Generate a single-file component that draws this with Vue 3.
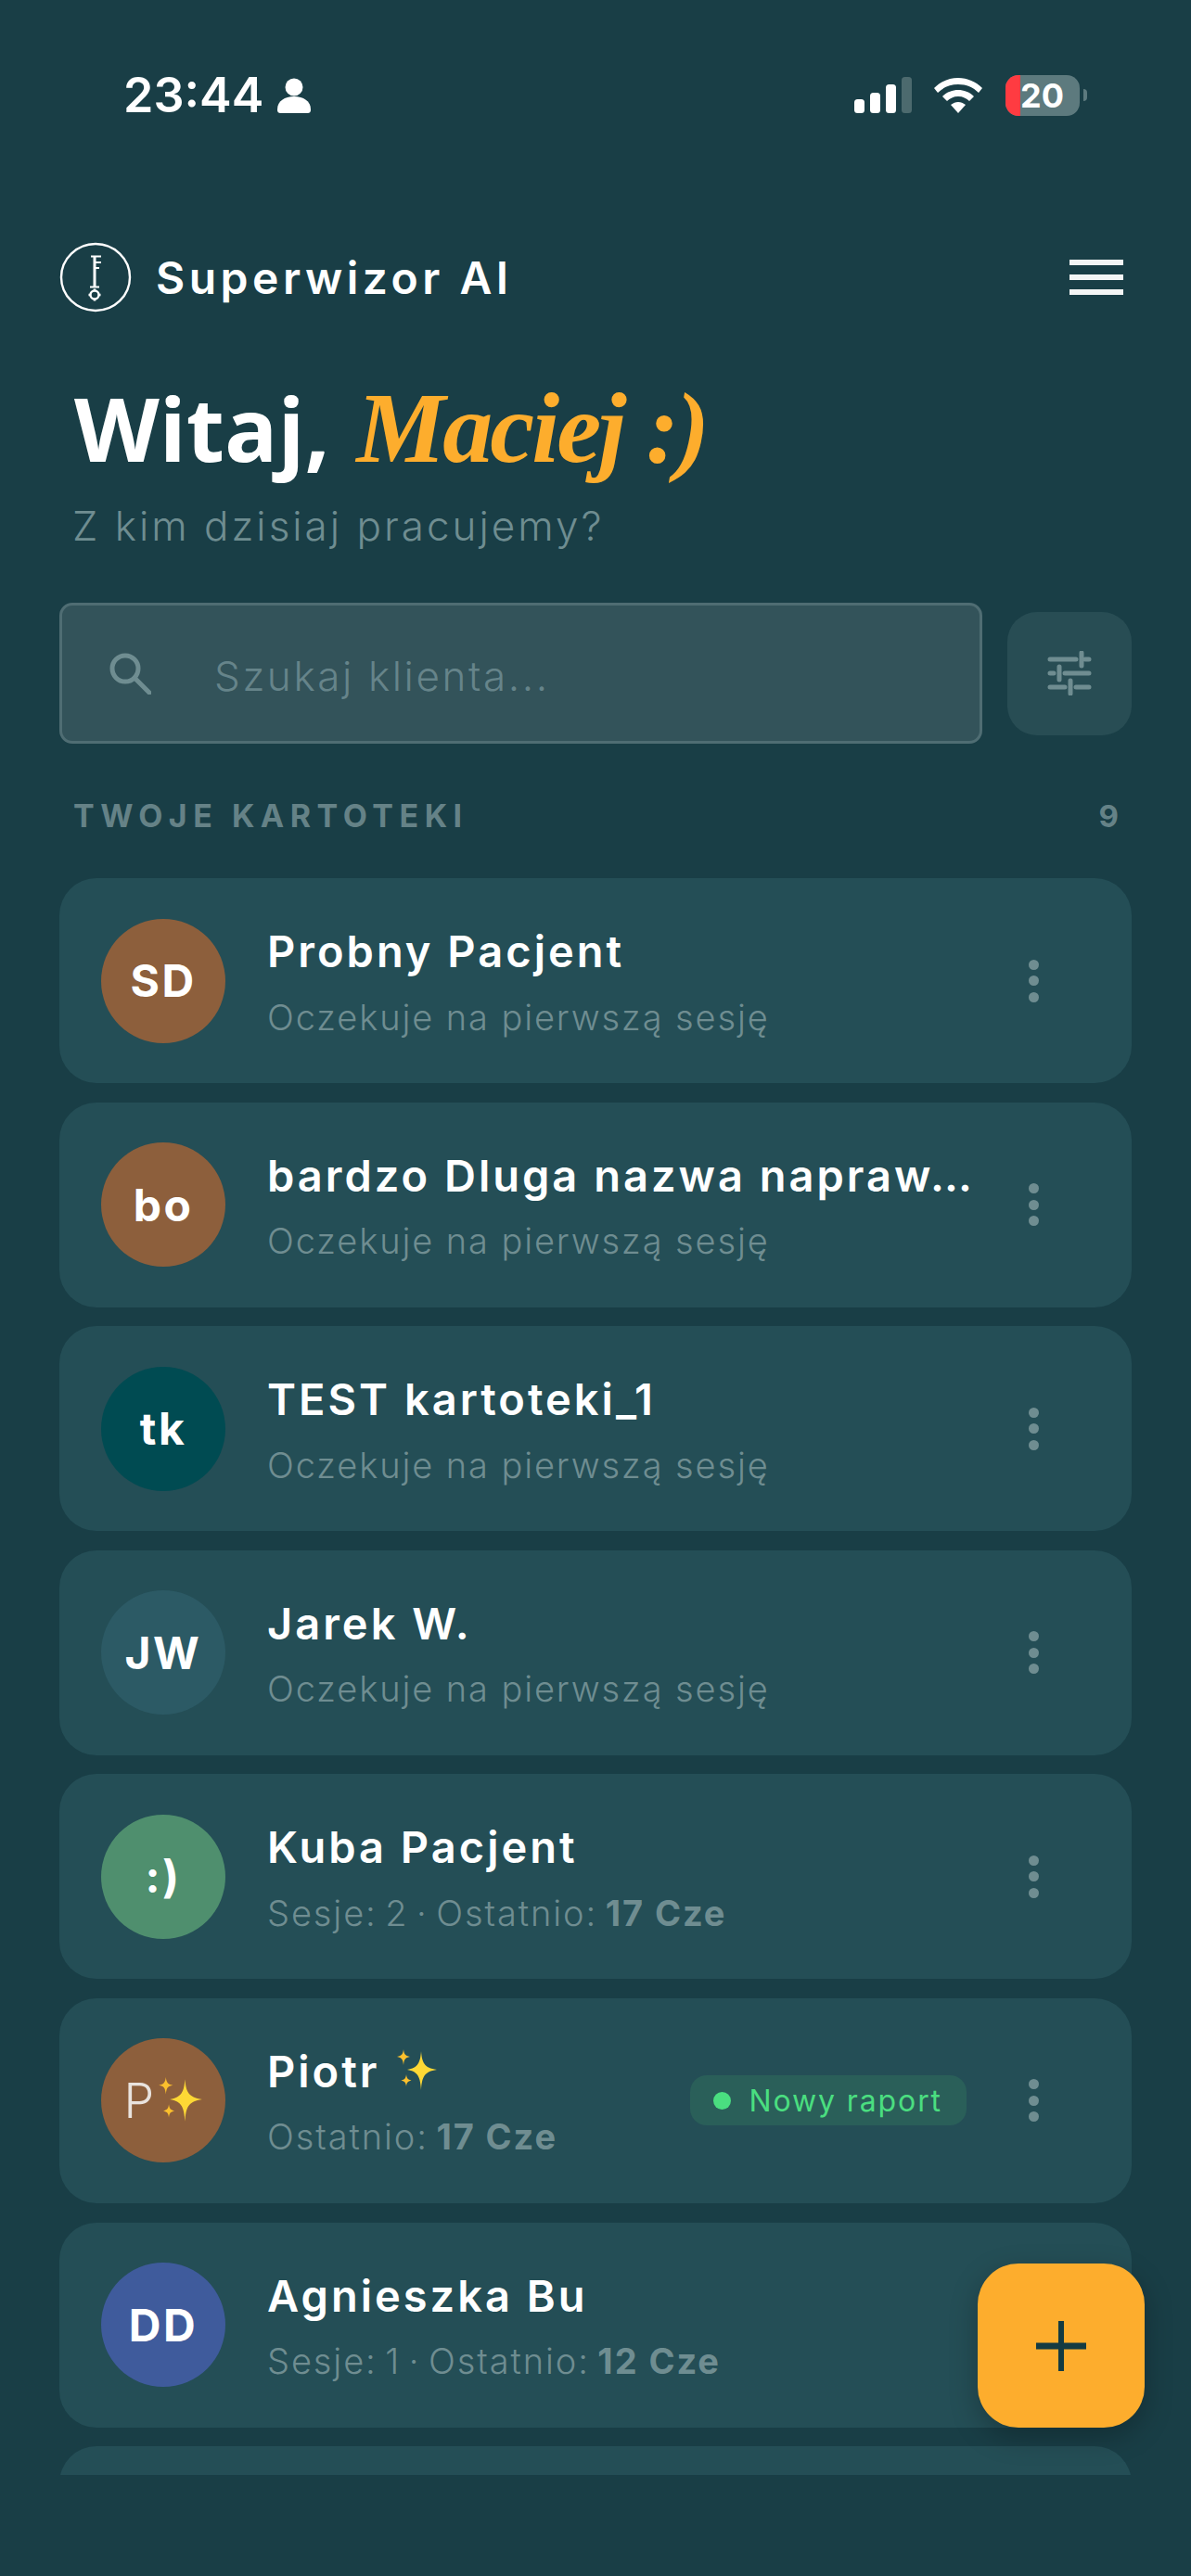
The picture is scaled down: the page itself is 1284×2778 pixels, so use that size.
<template>
  <div class="page">
    <div class="status">
      <div class="status-left">
        <span class="time">23:44</span>
        <svg class="person" viewBox="0 0 36 38" width="36" height="38"><circle cx="18" cy="10" r="9.5" fill="#fff" /><path d="M0 34c0-9 8-14 18-14s18 5 18 14c0 3-1 4-4 4H4c-3 0-4-1-4-4z" fill="#fff" /></svg>
      </div>
      <div class="status-right">
        <svg viewBox="0 0 62 40" width="62" height="40">
          <rect x="0" y="24" width="11" height="15" rx="3.5" fill="#fff" />
          <rect x="17" y="17" width="11" height="22" rx="3.5" fill="#fff" />
          <rect x="34" y="8" width="11" height="31" rx="3.5" fill="#fff" />
          <rect x="51" y="0" width="11" height="39" rx="3.5" fill="#4c6a6e" />
        </svg>
        <svg class="wifi" viewBox="0 0 54 40" width="54" height="40">
          <path d="M27 1C17 1 8 5 1 12l4 5c6-6 13-9 22-9s16 3 22 9l4-5C46 5 37 1 27 1z" fill="#fff" />
          <path d="M27 14c-6 0-12 2-17 7l5 5c3-3 7-5 12-5s9 2 12 5l5-5c-5-5-11-7-17-7z" fill="#fff" />
          <path d="M27 27c-3 0-5 1-8 3l8 9 8-9c-3-2-5-3-8-3z" fill="#fff" />
        </svg>
        <div class="battery">
          <div class="battery-fill"></div>
          <span class="battery-num">20</span>
          <div class="battery-nub"></div>
        </div>
      </div>
    </div>

    <header class="top">
      <div class="brand">
        <svg class="logo" viewBox="0 0 78 76" width="78" height="76" fill="none" stroke="#fff">
          <ellipse cx="39" cy="38" rx="37" ry="36" stroke-width="2.4" />
          <path d="M38 15v34" stroke-width="3" />
          <path d="M34 15.500h11M38 22h7M38 28h5M33 48.500h10" stroke-width="2.2" />
          <circle cx="38" cy="57" r="4.500" stroke-width="2.400" />
          <path d="M38 50.500v2M38 61.500v2M31.500 57h2M42.500 57h2" stroke-width="2.600" />
        </svg>
        <span class="brand-name">Superwizor AI</span>
      </div>
      <div class="burger"><i></i><i></i><i></i></div>
    </header>

    <h1 class="hello">Witaj, <em>Maciej :)</em></h1>
    <p class="question">Z kim dzisiaj pracujemy?</p>

    <div class="search-row">
      <div class="search">
        <svg viewBox="0 0 46 46" width="46" height="46" fill="none" stroke="#6f8d91" stroke-width="5">
          <circle cx="18" cy="18" r="14" />
          <path d="M28 28l16 16" stroke-linecap="round" />
        </svg>
        <span class="placeholder">Szukaj klienta...</span>
      </div>
      <div class="filter">
        <svg viewBox="0 0 48 48" width="48" height="48" fill="none" stroke="#6f8d91" stroke-width="5" stroke-linecap="round">
          <path d="M3 9h28M41 9h4M37 2v14" />
          <path d="M3 24h4M19 24h26M13 17v14" />
          <path d="M3 39h16M31 39h14M25 32v14" />
        </svg>
      </div>
    </div>

    <div class="section">
      <span class="section-title">TWOJE KARTOTEKI</span>
      <span class="section-count">9</span>
    </div>

    <div class="list">
      <div v-for="c in clients" :key="c.name" class="card">
        <div class="avatar" :class="{ thin: c.spark }" :style="{ background: c.color }">
          {{ c.initials }}
          <svg v-if="c.spark" class="spark-big" viewBox="0 0 44 46" width="50" height="50"><use href="#sparkles" /></svg>
        </div>
        <div class="info">
          <div class="name">
            <span class="name-text">{{ c.name }}</span>
            <svg v-if="c.spark" class="spark" viewBox="0 0 44 46" width="48" height="46"><use href="#sparkles" /></svg>
          </div>
          <div class="sub" :class="{ dated: c.date }">{{ c.sub }}<b v-if="c.date">{{ c.date }}</b></div>
        </div>
        <div v-if="c.badge" class="badge"><i></i>{{ c.badge }}</div>
        <div class="dots"><i></i><i></i><i></i></div>
      </div>
      <div class="card"></div>
    </div>

    <div class="fab">
      <svg viewBox="0 0 54 54" width="54" height="54" fill="none" stroke="#143b42"><path d="M27 0v54" stroke-width="6" /><path d="M0 27h54" stroke-width="7" /></svg>
    </div>

    <svg width="0" height="0" class="defs">
      <defs>
        <symbol id="sparkles" viewBox="0 0 44 46">
          <path d="M27 2c1 12 3 18 17 20-14 2-16 8-17 22-1-14-3-20-15-22 12-2 14-8 15-20z" fill="#fdd835" />
          <path d="M8 0c.6 5 1.600 7 7 8-5.400 1-6.400 3-7 9-.6-6-1.600-8-7-9 5.400-1 6.400-3 7-8z" fill="#fbc02d" />
          <path d="M11 27c.5 4 1.300 5.500 5.500 6.500-4.200 1-5 2.500-5.500 6.500-.5-4-1.300-5.500-5.500-6.500 4.200-1 5-2.500 5.500-6.500z" fill="#fbc02d" />
        </symbol>
      </defs>
    </svg>
  </div>
</template>

<script setup>
const WAITING = 'Oczekuje na pierwszą sesję'

const clients = [
  { initials: 'SD', name: 'Probny Pacjent', sub: WAITING, color: '#8d5f3c' },
  { initials: 'bo', name: 'bardzo Dluga nazwa napraw…', sub: WAITING, color: '#8d5f3c' },
  { initials: 'tk', name: 'TEST kartoteki_1', sub: WAITING, color: '#004b52' },
  { initials: 'JW', name: 'Jarek W.', sub: WAITING, color: '#2c5a65' },
  { initials: ':)', name: 'Kuba Pacjent', sub: 'Sesje: 2 · Ostatnio: ', date: '17 Cze', color: '#4f8f6e' },
  { initials: 'P', name: 'Piotr', sub: 'Ostatnio: ', date: '17 Cze', color: '#8d5f3c', spark: true, badge: 'Nowy raport' },
  { initials: 'DD', name: 'Agnieszka Bu', sub: 'Sesje: 1 · Ostatnio: ', date: '12 Cze', color: '#3f5b9c' },
]
</script>

<style>
html,
body {
  margin: 0;
  background: #193e46;
}
</style>

<style scoped>
.page {
  position: relative;
  width: 1284px;
  height: 2778px;
  overflow: hidden;
  background: #193e46;
  color: #fff;
  font-family: Inter, "Noto Sans", sans-serif;
}
.defs {
  position: absolute;
}

.status {
  display: flex;
  justify-content: space-between;
  align-items: center;
  height: 44px;
  padding: 81px 120px 0 133px;
}
.status-left {
  display: flex;
  align-items: center;
  gap: 15px;
}
.time {
  font-size: 52px;
  font-weight: 600;
  line-height: 44px;
}
.status-right {
  display: flex;
  align-items: center;
}
.wifi {
  margin-left: 23px;
}
.battery {
  position: relative;
  width: 80px;
  height: 44px;
  margin-left: 24px;
  border-radius: 14px;
  background: #5d7a7e;
  display: flex;
  align-items: center;
  justify-content: flex-end;
  padding-right: 17px;
  box-sizing: border-box;
}
.battery-fill {
  position: absolute;
  left: 0;
  top: 0;
  bottom: 0;
  width: 16px;
  background: #ff3b41;
  border-radius: 14px 0 0 14px;
}
.battery-num {
  position: relative;
  font-size: 36px;
  font-weight: 700;
}
.battery-nub {
  position: absolute;
  right: -8px;
  top: 15px;
  width: 4px;
  height: 13px;
  border-radius: 0 7px 7px 0;
  background: #5d7a7e;
}

.top {
  display: flex;
  justify-content: space-between;
  align-items: center;
  margin-top: 136px;
  padding: 0 73px 0 64px;
}
.brand {
  display: flex;
  align-items: center;
  gap: 26px;
}
.brand-name {
  font-size: 48px;
  font-weight: 600;
  letter-spacing: 4.5px;
}
.burger {
  display: flex;
  flex-direction: column;
  gap: 10px;
}
.burger i {
  display: block;
  width: 58px;
  height: 6px;
  background: #f3f5f5;
}

.hello {
  margin: 69px 0 0 80px;
  font-family: "Open Sans", sans-serif;
  font-size: 95px;
  font-weight: 700;
  line-height: 110px;
  letter-spacing: 0;
}
.hello em {
  margin-left: 4px;
  color: #fdad2d;
  font-family: "Liberation Serif", serif;
  font-size: 108px;
  font-weight: 700;
  font-style: italic;
  letter-spacing: -3px;
}
.question {
  margin: 23px 0 0 78px;
  color: #6f8d91;
  font-size: 44px;
  font-weight: 300;
  line-height: 54px;
  letter-spacing: 3px;
}

.search-row {
  display: flex;
  align-items: center;
  gap: 27px;
  margin: 56px 64px 0;
}
.search {
  flex: 1;
  display: flex;
  align-items: center;
  gap: 68px;
  height: 152px;
  padding-left: 50px;
  box-sizing: border-box;
  background: #33535a;
  border: 3px solid #4f6d73;
  border-radius: 14px;
}
.placeholder {
  padding-top: 5px;
  color: #66848a;
  font-size: 44px;
  font-weight: 300;
  letter-spacing: 2.6px;
}
.filter {
  display: flex;
  align-items: center;
  justify-content: center;
  width: 134px;
  height: 133px;
  background: #284d54;
  border-radius: 32px;
}

.section {
  display: flex;
  justify-content: space-between;
  align-items: center;
  margin: 58px 78px 0 79px;
  color: #658287;
  font-weight: 700;
  line-height: 40px;
}
.section-title {
  font-size: 34px;
  letter-spacing: 6.500px;
}
.section-count {
  font-size: 33px;
}

.list {
  display: flex;
  flex-direction: column;
  gap: 20.6px;
  height: 1722px;
  margin: 47px 64px 0;
  overflow: hidden;
}
.card {
  display: flex;
  flex: none;
  align-items: center;
  height: 221px;
  padding: 0 100px 0 45px;
  background: #244e56;
  border-radius: 40px;
}
.avatar {
  display: flex;
  flex: none;
  align-items: center;
  justify-content: center;
  width: 134px;
  height: 134px;
  border-radius: 50%;
  font-size: 48px;
  font-weight: 700;
  letter-spacing: 2.500px;
}
.avatar.thin {
  font-size: 52px;
  font-weight: 300;
  color: #e9e3de;
  box-sizing: border-box;
}
.info {
  flex: 1;
  min-width: 0;
  margin-left: 45px;
}
.name {
  display: flex;
  align-items: center;
  gap: 16px;
  height: 60px;
  font-size: 47px;
  font-weight: 600;
  letter-spacing: 3px;
}
.name-text {
  white-space: nowrap;
}
.sub {
  margin-top: 18px;
  color: #6f8d91;
  font-size: 38px;
  font-weight: 300;
  line-height: 46px;
  letter-spacing: 1.900px;
}
.sub.dated {
  word-spacing: -4px;
}
.sub b {
  font-weight: 700;
  word-spacing: 0;
}
.badge {
  display: flex;
  flex: none;
  align-items: center;
  gap: 19px;
  height: 54px;
  padding: 0 26px 0 25px;
  margin-left: 12px;
  color: #4ade80;
  background: #2a5f59;
  border-radius: 18px;
  font-size: 32px;
  letter-spacing: 1.900px;
}
.badge i {
  width: 19px;
  height: 19px;
  border-radius: 50%;
  background: #4ade80;
}
.dots {
  display: flex;
  flex: none;
  flex-direction: column;
  gap: 6.500px;
  margin-left: 67px;
}
.dots i {
  display: block;
  width: 11px;
  height: 11px;
  border-radius: 50%;
  background: #6f8d91;
}

.fab {
  position: absolute;
  left: 1054px;
  top: 2441px;
  display: flex;
  align-items: center;
  justify-content: center;
  width: 180px;
  height: 177px;
  background: #fdad2d;
  border-radius: 44px;
  box-shadow: 0 10px 30px rgba(0, 0, 0, 0.25);
}
</style>
